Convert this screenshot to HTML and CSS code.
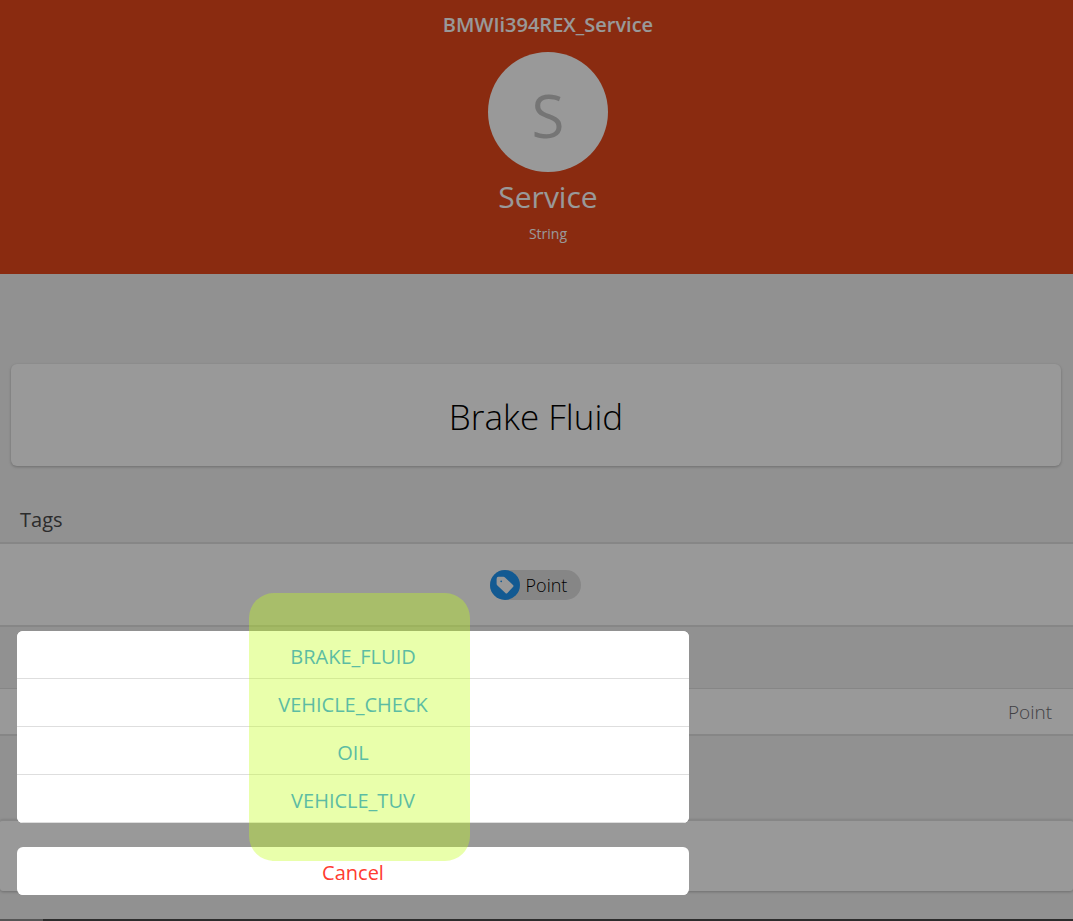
FILE: index.html
```html
<!DOCTYPE html>
<html lang="en">
<head>
<meta charset="utf-8">
<title>BMWIi394REX_Service</title>
<link rel="stylesheet" href="styles.css">
</head>
<body>
<main class="page">
  <header class="hero">
    <h1 class="hero-title">BMWIi394REX_Service</h1>
    <div class="avatar">S</div>
    <div class="hero-label">Service</div>
    <div class="hero-type">String</div>
  </header>
  <section class="card">Brake Fluid</section>
  <h2 class="block-title">Tags</h2>
  <section class="tags">
    <span class="chip">
      <span class="chip-media">
        <svg viewBox="0 0 20 20" width="20" height="20" aria-hidden="true"><path fill="#fff" fill-rule="evenodd" d="M3.400 1.800h5q.9 0 1.600.7l8 7.500q1 1 0 2l-5.600 6q-1 1-2 0l-8-7.500q-.8-.7-.8-1.700V4q0-2.200 1.800-2.200zM6.200 5.400a.9.900 0 1 0 0 1.800.9.900 0 0 0 0-1.800z"/></svg>
      </span>
      <span class="chip-label">Point</span>
    </span>
  </section>
  <section class="row">Point</section>
  <section class="panel"></section>
  <footer class="edge"><div class="edge-start"></div></footer>
</main>
<div class="backdrop"></div>
<div class="actions" role="dialog" aria-label="Service">
  <div class="group">
    <button class="action" type="button">BRAKE_FLUID</button>
    <button class="action" type="button">VEHICLE_CHECK</button>
    <button class="action" type="button">OIL</button>
    <button class="action" type="button">VEHICLE_TUV</button>
  </div>
  <div class="group">
    <button class="action action-cancel" type="button">Cancel</button>
  </div>
  <div class="highlight"></div>
</div>
</body>
</html>
```
FILE: styles.css
```css
* { box-sizing: border-box; }
body {
  margin: 0;
  background: #f2f2f2;
  color: #000;
  font-family: "Segoe UI", "Open Sans", "Noto Sans", sans-serif;
  font-size: 20px;
}
.page {
  display: flex;
  flex-direction: column;
  min-height: 100vh;
}
.hero {
  display: flex;
  flex-direction: column;
  align-items: center;
  padding: 8px 0 26px 23px;
  background: #e6481c;
  color: #fff;
}
.hero-title {
  margin: 0;
  font-size: 20px;
  font-weight: 600;
  line-height: 34px;
}
.avatar {
  width: 120px;
  height: 120px;
  margin-top: 10px;
  padding-top: 3px;
  border-radius: 50%;
  background: #fff;
  color: #c4c4c4;
  font-size: 60px;
  line-height: 120px;
  text-align: center;
}
.hero-label {
  font-size: 30px;
  line-height: 50px;
}
.hero-type {
  font-size: 14px;
  line-height: 24px;
  padding-bottom: 2px;
}
.card {
  margin: 90px 12px 0 11px;
  padding-top: 4px;
  border-radius: 6px;
  background: #fff;
  box-shadow: 0 1px 3px rgba(0, 0, 0, .25);
  font-size: 35px;
  font-weight: 300;
  line-height: 98px;
  text-align: center;
}
.block-title {
  margin: 38px 20px 6px;
  color: #4a4a4a;
  font-size: 20px;
  font-weight: 500;
  line-height: 32px;
}
.tags {
  display: flex;
  justify-content: center;
  padding: 26px 2px 25px 0;
  border-top: 2px solid #e0e0e0;
  border-bottom: 2px solid #e0e0e0;
  background: #fff;
}
.chip {
  display: flex;
  align-items: center;
  gap: 6px;
  height: 30px;
  padding-right: 14px;
  border-radius: 15px;
  background: #e0e0e0;
  font-size: 18px;
  font-weight: 300;
}
.chip-media {
  display: flex;
  align-items: center;
  justify-content: center;
  width: 30px;
  height: 30px;
  border-radius: 50%;
  background: #2196f3;
}
.row {
  margin-top: 61px;
  padding: 1px 21px 0;
  border-top: 1px solid #e0e0e0;
  border-bottom: 2px solid #e0e0e0;
  background: #fff;
  color: #6d6d72;
  font-size: 19px;
  font-weight: 300;
  line-height: 44px;
  text-align: right;
}
.panel {
  min-height: 72px;
  margin-top: 83px;
  border-top: 2px solid #e0e0e0;
  border-radius: 3px;
  background: #fff;
  box-shadow: 0 1px 3px rgba(0, 0, 0, .25);
}
.edge {
  margin-top: auto;
  background: #4a4a4a;
}
.edge-start {
  width: 4%;
  height: 2px;
  background: #8e8e8e;
}
.backdrop {
  position: fixed;
  inset: 0;
  background: rgba(0, 0, 0, .4);
}
.actions {
  position: fixed;
  bottom: 26px;
  left: 17px;
  display: flex;
  flex-direction: column;
  gap: 24px;
  width: calc(100% - 34px);
  max-width: 672px;
}
.group {
  overflow: hidden;
  border-radius: 6px;
  background: #fff;
}
.action {
  display: block;
  width: 100%;
  height: 48px;
  padding: 4px 0 0;
  border: 0;
  border-bottom: 1px solid #dedede;
  background: #fff;
  color: #2196f3;
  font: inherit;
  line-height: 43px;
  cursor: pointer;
}
.action-cancel {
  border-bottom-color: #fff;
  color: #ff3b30;
}
.highlight {
  position: absolute;
  top: -38px;
  bottom: 34px;
  left: 232px;
  width: 221px;
  border-radius: 25px;
  background: rgba(195, 255, 28, .37);
  pointer-events: none;
}
```
